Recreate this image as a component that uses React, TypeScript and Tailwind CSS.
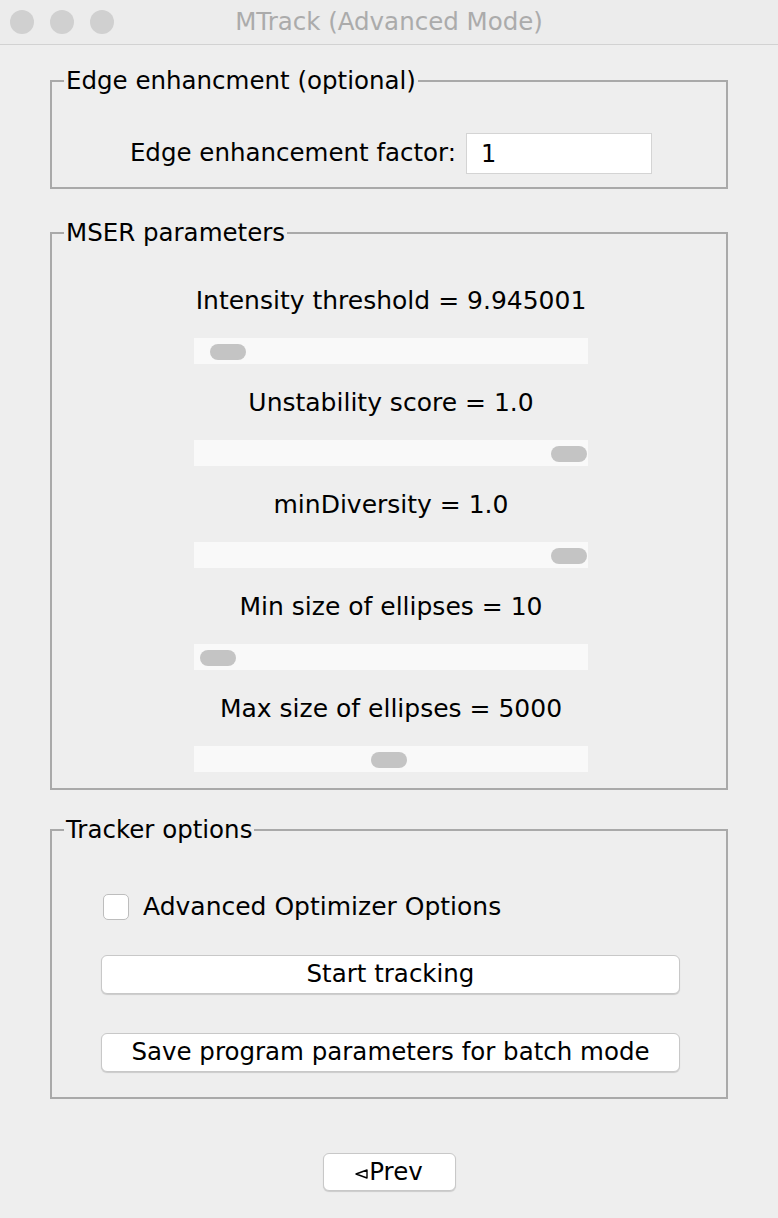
import React from 'react'

const sliders = [
  { label: 'Intensity threshold = 9.945001', left: 16 },
  { label: 'Unstability score = 1.0', left: 357 },
  { label: 'minDiversity = 1.0', left: 357 },
  { label: 'Min size of ellipses = 10', left: 6 },
  { label: 'Max size of ellipses = 5000', left: 177 },
]

function Panel({ title, className = '', children }: { title: string; className?: string; children: React.ReactNode }) {
  return (
    <fieldset className={`mx-[50px] border-2 border-[#a9a9a9] px-0 ${className}`}>
      <legend className="ml-[12px] px-[2px] h-[30px] leading-[30px] text-[24.5px] text-black">{title}</legend>
      {children}
    </fieldset>
  )
}

function Slider({ label, left, last }: { label: string; left: number; last: boolean }) {
  return (
    <div className="flex flex-col items-center">
      <div className="h-[30px] leading-[31px] text-[25px] text-black">{label}</div>
      <div className={`relative mt-[23px] h-[26px] w-[394px] bg-[#f9f9f9] ${last ? '' : 'mb-[23px]'}`}>
        <div
          className="absolute top-[6px] h-[16px] w-[36px] rounded-full bg-[#c4c4c4]"
          style={{ left }}
        />
      </div>
    </div>
  )
}

export default function App() {
  return (
    <div
      className="w-[778px] h-[1218px] bg-[#eeeeee] overflow-hidden"
      style={{ fontFamily: '"DejaVu Sans", "Liberation Sans", sans-serif' }}
    >
      {/* title bar */}
      <div className="relative flex h-[45px] items-center justify-center border-b border-[#d2d2d2] bg-[#ececec]">
        <div className="absolute left-[10px] top-[10px] flex gap-[16px]">
          <span className="h-[24px] w-[24px] rounded-full bg-[#d0d0d0]" />
          <span className="h-[24px] w-[24px] rounded-full bg-[#d0d0d0]" />
          <span className="h-[24px] w-[24px] rounded-full bg-[#d0d0d0]" />
        </div>
        <span className="text-[24.5px] text-[#ababab]">MTrack (Advanced Mode)</span>
      </div>

      <Panel title="Edge enhancment (optional)" className="mt-[21px] pb-[13px]">
        <div className="mt-[37px] flex items-center justify-end pr-[74px]">
          <span className="text-[24.5px] text-black">Edge enhancement factor:</span>
          <div className="ml-[10px] h-[41px] w-[186px] border border-[#d4d4d4] bg-white pl-[14px] text-[24px] leading-[40px] text-black">
            1
          </div>
        </div>
      </Panel>

      <Panel title="MSER parameters" className="mt-[29px] pb-[16px]">
        <div className="mt-[37px] flex flex-col pl-[4px]">
          {sliders.map((s, i) => (
            <Slider key={i} label={s.label} left={s.left} last={i === sliders.length - 1} />
          ))}
        </div>
      </Panel>

      <Panel title="Tracker options" className="mt-[25px] pb-[25px]">
        <div className="ml-[51px] mt-[47px] flex h-[30px] items-center">
          <span className="h-[26px] w-[26px] rounded-[5px] border border-[#bdbdbd] bg-white" />
          <span className="ml-[14px] text-[25px] text-black">Advanced Optimizer Options</span>
        </div>
        <button className="ml-[49px] mt-[33px] flex h-[39px] w-[579px] items-center justify-center rounded-[6px] border border-[#c8c8c8] bg-white text-[24.5px] text-black shadow-[0_1px_1px_rgba(0,0,0,0.15)]">
          Start tracking
        </button>
        <button className="ml-[49px] mt-[39px] flex h-[39px] w-[579px] items-center justify-center rounded-[6px] border border-[#c8c8c8] bg-white text-[24.5px] text-black shadow-[0_1px_1px_rgba(0,0,0,0.15)]">
          Save program parameters for batch mode
        </button>
      </Panel>

      <div className="mt-[54px] flex justify-center">
        <button className="flex h-[38px] w-[133px] items-center justify-center rounded-[6px] border border-[#c8c8c8] bg-white text-[24.5px] text-black shadow-[0_1px_1px_rgba(0,0,0,0.15)]">
          <svg width="13" height="10" viewBox="0 0 13 10" className="mr-[1px] mt-[3px]">
            <path d="M1 5 L12 1 L12 9 Z" fill="none" stroke="black" strokeWidth="1.4" strokeLinejoin="round" />
          </svg>
          Prev
        </button>
      </div>
    </div>
  )
}
